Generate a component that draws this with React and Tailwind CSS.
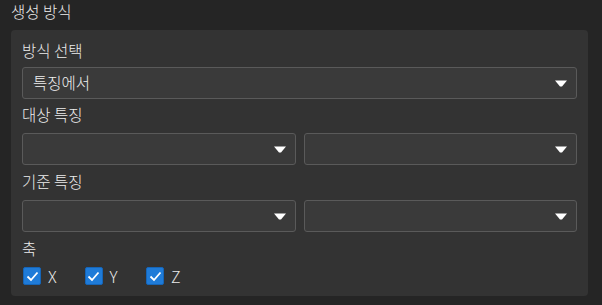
import React from "react";

const font = { fontFamily: '"Noto Sans CJK KR", "Noto Sans", sans-serif' };

function Arrow() {
  return (
    <svg width="12" height="7" viewBox="0 0 12 7" className="shrink-0">
      <path d="M0 0.5 L12 0.5 L7 6.5 L5 6.5 Z" fill="#ffffff" />
    </svg>
  );
}

function Select({ value }) {
  return (
    <div className="flex-1 h-[32px] rounded-[3px] border border-[#5a5a5a] bg-[#3a3a3a] flex items-center justify-between pl-[10px] pr-[9px]">
      <span className="text-[15.5px] text-[#f0f0f0] leading-none">{value}</span>
      <Arrow />
    </div>
  );
}

function Check({ label }) {
  return (
    <div className="w-[61.5px] flex items-center gap-[7px]">
      <div className="w-[18px] h-[18px] rounded-[2px] bg-[#1f7bd8] border border-[#1565b8] flex items-center justify-center">
        <svg width="13" height="11" viewBox="0 0 13 11">
          <path d="M1.5 5.5 L5 9 L11.5 1.5" stroke="#fff" strokeWidth="1.8" fill="none" />
        </svg>
      </div>
      <span className="text-[16px] text-[#eaeaea] leading-none">{label}</span>
    </div>
  );
}

export default function App() {
  return (
    <div className="w-[602px] h-[305px] bg-[#252525] text-[#ededed] font-light" style={font}>
      <div className="pl-[11px] pt-[0px] h-[30px] text-[15.5px] leading-[22px]">생성 방식</div>
      <div className="ml-[11px] w-[577px] h-[266px] rounded-[4px] bg-[#333333] px-[11px] pt-[6px]">
        <div className="text-[15.5px] leading-[22px] h-[31px] pt-[3px]">방식 선택</div>
        <div className="flex">
          <Select value="특징에서" />
        </div>
        <div className="text-[15.5px] leading-[22px] h-[34px] pt-[4px]">대상 특징</div>
        <div className="flex gap-[8px]">
          <Select value="" />
          <Select value="" />
        </div>
        <div className="text-[15.5px] leading-[22px] h-[35px] pt-[5px]">기준 특징</div>
        <div className="flex gap-[8px]">
          <Select value="" />
          <Select value="" />
        </div>
        <div className="text-[15.5px] leading-[22px] h-[35px] pt-[5px]">축</div>
        <div className="flex pl-[1px]">
          <Check label="X" />
          <Check label="Y" />
          <Check label="Z" />
        </div>
      </div>
    </div>
  );
}
